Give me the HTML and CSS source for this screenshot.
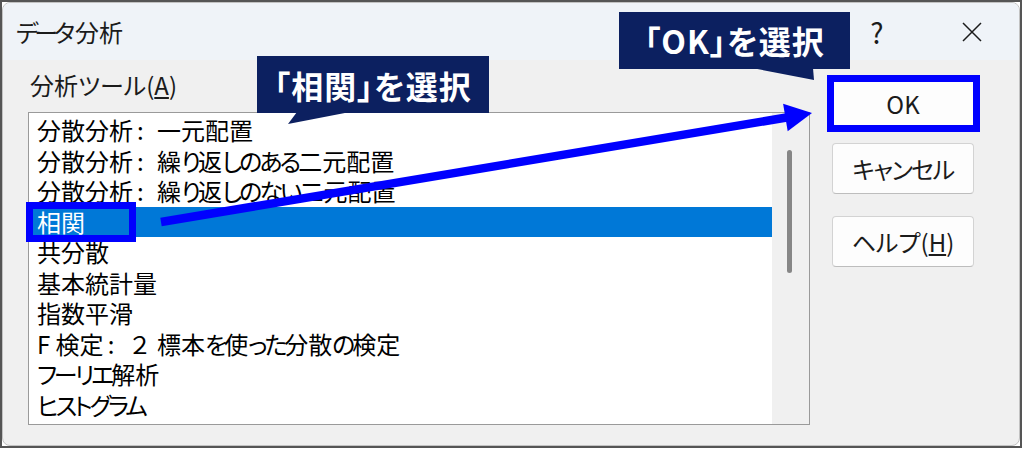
FILE: index.html
```html
<!DOCTYPE html>
<html lang="ja">
<head>
<meta charset="utf-8">
<title>データ分析</title>
<link rel="stylesheet" href="styles.css">
</head>
<body>
<div class="frame">
  <div class="window">
    <div class="titlebar">
      <span class="title"><span class="kt">データ</span>分析</span>
      <span class="qmark">?</span>
      <svg class="close" viewBox="0 0 20 20"><path d="M1 1L19 19M19 1L1 19"/></svg>
    </div>
    <div class="body">
      <div class="left">
        <div class="label">分析ツール(<u>A</u>)</div>
        <div class="listbox">
          <ul class="items">
            <li>分散分析<span class="colon">:</span>一元配置</li>
            <li>分散分析<span class="colon">:</span>繰<span class="k">り</span>返<span class="k">しのある</span>二元配置</li>
            <li>分散分析<span class="colon">:</span>繰<span class="k">り</span>返<span class="k">しのない</span>二元配置</li>
            <li class="sel">相関</li>
            <li>共分散</li>
            <li>基本統計量</li>
            <li>指数平滑</li>
            <li>F 検定<span class="colon">:</span><span class="fw">２</span> 標本<span class="k">を</span>使<span class="k">った</span>分散<span class="k">の</span>検定</li>
            <li><span class="k">フーリエ</span>解析</li>
            <li><span class="k">ヒストグラム</span></li>
          </ul>
          <div class="track"><div class="thumb"></div></div>
        </div>
      </div>
      <div class="buttons">
        <div class="btn">OK</div>
        <div class="btn"><span class="kb">キャンセル</span></div>
        <div class="btn help">ヘルプ(<u>H</u>)</div>
      </div>
    </div>
  </div>
  <div class="overlay">
    <div class="rect rect-sel"></div>
    <div class="rect rect-ok"></div>
    <div class="callout callout-1">「相関」を選択</div>
    <div class="callout callout-2">「OK」を選択</div>
    <svg class="marks" viewBox="0 0 1024 449">
      <polygon class="tail" points="297,112 288,124 350,112"/>
      <polygon class="tail" points="752,68 814,80 813,68"/>
      <line class="arrow-line" x1="161" y1="222" x2="788" y2="117.3"/>
      <polygon class="arrow-head" points="812,113 783.1,103.7 787.7,131.3"/>
    </svg>
  </div>
</div>
</body>
</html>
```

FILE: styles.css
```css
html, body {
  margin: 0;
  padding: 0;
  background: #ffffff;
}

body {
  font-family: "Noto Sans CJK JP", "Noto Sans", sans-serif;
  color: #000;
}

.frame {
  position: relative;
  width: 1022px;
  height: 448px;
  box-sizing: border-box;
  border: 2px solid #555555;
  background: #ffffff;
}

.window {
  height: 100%;
  box-sizing: border-box;
  border: 1px solid #c2c2c2;
  border-radius: 8px;
  background: #f0f0f0;
  overflow: hidden;
  display: flex;
  flex-direction: column;
}

.titlebar {
  flex: none;
  height: 57px;
  background: #eff3f8;
  display: flex;
  align-items: center;
  padding-left: 13px;
}

.title {
  font-size: 24px;
  line-height: 30px;
  color: #1b1b1b;
  font-feature-settings: "palt";
}

.kt {
  letter-spacing: -4px;
  margin-right: 4px;
}

.qmark {
  margin-left: auto;
  width: 24px;
  text-align: center;
  font-size: 28px;
  line-height: 30px;
  color: #1b1b1b;
  margin-right: 73px;
}

.close {
  width: 20px;
  height: 20px;
  margin-right: 37px;
  fill: none;
  stroke: #1b1b1b;
  stroke-width: 1.5;
}

.body {
  display: flex;
  padding: 10px 0 0 25px;
}

.left {
  width: 782px;
  flex: none;
}

.label {
  font-size: 24px;
  line-height: 30px;
  margin-left: 2px;
  color: #1b1b1b;
  font-feature-settings: "palt";
}

u {
  text-decoration-thickness: 1.5px;
  text-underline-offset: 2px;
}

.listbox {
  margin-top: 12px;
  height: 313px;
  box-sizing: border-box;
  border: 1px solid #9a9a9a;
  background: #ffffff;
  display: flex;
}

.items {
  flex: 1;
  margin: 0;
  padding: 2px 0 0;
  list-style: none;
  overflow: hidden;
}

.items li {
  height: 30.5px;
  line-height: 30.5px;
  padding-left: 8px;
  font-size: 24px;
  white-space: nowrap;
  color: #000;
  font-feature-settings: "palt";
}

.items li.sel {
  background: #0078d7;
  color: #ffffff;
}

.colon {
  display: inline-block;
  width: 24px;
  padding-left: 4px;
  box-sizing: border-box;
}

.fw {
  font-feature-settings: normal;
}

.k {
  letter-spacing: -3px;
}

.kb {
  letter-spacing: -1.5px;
}

.track {
  flex: none;
  width: 37px;
  box-sizing: border-box;
  padding-top: 37px;
  background: #f0f0f0;
}

.thumb {
  width: 5px;
  height: 123px;
  margin-left: 15px;
  border-radius: 3px;
  background: #868686;
}

.buttons {
  margin-left: 22px;
  padding-top: 8px;
  display: flex;
  flex-direction: column;
}

.btn {
  width: 142px;
  height: 51px;
  box-sizing: border-box;
  border: 1px solid #d3d3d3;
  border-bottom-color: #bdbdbd;
  border-radius: 4px;
  background: #fdfdfd;
  display: flex;
  align-items: center;
  justify-content: center;
  font-size: 24px;
  color: #1b1b1b;
  font-feature-settings: "palt";
}

.btn + .btn {
  margin-top: 14px;
}

.btn.help {
  margin-top: 22px;
}

/* annotation overlay */
.overlay {
  position: absolute;
  left: -2px;
  top: -2px;
  width: 1024px;
  height: 449px;
  pointer-events: none;
}

.rect {
  position: absolute;
  box-sizing: border-box;
  border: 7px solid #0000ff;
}

.rect-sel {
  left: 26px;
  top: 202px;
  width: 110px;
  height: 40px;
}

.rect-ok {
  left: 827px;
  top: 75px;
  width: 153px;
  height: 57px;
}

.callout {
  position: absolute;
  height: 57px;
  background: #0c2060;
  color: #ffffff;
  font-size: 32px;
  font-weight: 700;
  letter-spacing: 1px;
  line-height: 57px;
  text-align: center;
  font-feature-settings: "palt";
}

.callout-1 {
  left: 257px;
  top: 56px;
  width: 232px;
  line-height: 59px;
}

.callout-2 {
  left: 619px;
  top: 12px;
  width: 231px;
}

.marks {
  position: absolute;
  left: 0;
  top: 0;
  width: 1024px;
  height: 449px;
}

.tail {
  fill: #0c2060;
}

.arrow-line {
  stroke: #0000ff;
  stroke-width: 8.5;
}

.arrow-head {
  fill: #0000ff;
}
```
